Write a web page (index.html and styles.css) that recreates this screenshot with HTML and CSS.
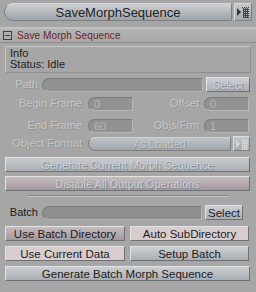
FILE: index.html
```html
<!DOCTYPE html>
<html>
<head>
<meta charset="utf-8">
<link rel="stylesheet" href="styles.css">
</head>
<body>
<div class="app">
  <div class="top">
    <div class="bigbtn">SaveMorphSequence</div>
    <div class="iconbtn"><svg width="14" height="14" viewBox="0 0 14 14"><path d="M1 3 L5 7 L1 11 Z" fill="#333"/><g fill="#444"><rect x="6" y="2" width="1" height="1"/><rect x="8" y="2" width="1" height="1"/><rect x="10" y="2" width="1" height="1"/><rect x="12" y="2" width="1" height="1"/><rect x="7" y="4" width="6" height="1"/><rect x="7" y="6" width="6" height="1"/><rect x="7" y="8" width="6" height="1"/><rect x="7" y="10" width="6" height="1"/><rect x="7" y="12" width="6" height="1"/><rect x="7" y="3" width="1" height="10"/><rect x="9" y="3" width="1" height="10"/><rect x="11" y="3" width="1" height="10"/></g></svg></div>
  </div>
  <div class="header">
    <span class="minus"></span>
    <span class="htitle">Save Morph Sequence</span>
  </div>
  <div class="panel">
    <div class="info">
      <div>Info</div>
      <div>Status: Idle</div>
    </div>
    <div class="row r-path">
      <span class="lbl lbl-path dis">Path</span>
      <div class="field wide dis-field"></div>
      <div class="btn dis sel">Select</div>
    </div>
    <div class="row r-begin">
      <span class="lbl lbl-a dis">Begin Frame</span>
      <div class="field num dis-field"><span>0</span></div>
      <span class="lbl lbl-b dis">Offset</span>
      <div class="field num dis-field"><span>0</span></div>
    </div>
    <div class="row r-end">
      <span class="lbl lbl-a dis">End Frame</span>
      <div class="field num dis-field"><span>60</span></div>
      <span class="lbl lbl-b dis">Objs/Frm</span>
      <div class="field num dis-field"><span>1</span></div>
    </div>
    <div class="row r-obj">
      <span class="lbl lbl-a dis">Object Format</span>
      <div class="drop dis">As Loaded</div>
      <div class="iconbtn small"><svg width="14" height="14" viewBox="0 0 14 14"><path d="M1 3 L5 7 L1 11 Z" fill="#d2d4d6"/><g fill="#d2d4d6"><rect x="6" y="2" width="1" height="1"/><rect x="8" y="2" width="1" height="1"/><rect x="10" y="2" width="1" height="1"/><rect x="12" y="2" width="1" height="1"/><rect x="7" y="4" width="6" height="1"/><rect x="7" y="6" width="6" height="1"/><rect x="7" y="8" width="6" height="1"/><rect x="7" y="10" width="6" height="1"/><rect x="7" y="12" width="6" height="1"/><rect x="7" y="3" width="1" height="10"/><rect x="9" y="3" width="1" height="10"/><rect x="11" y="3" width="1" height="10"/></g></svg></div>
    </div>
    <div class="btn full dis blue r-gen">Generate Current Morph Sequence</div>
    <div class="btn full dis rose r-disable">Disable All Output Operations</div>
    <div class="sep"></div>
    <div class="row r-batch">
      <span class="lbl lbl-path">Batch</span>
      <div class="field wide"></div>
      <div class="btn sel en">Select</div>
    </div>
    <div class="grid2">
      <div class="btn en rosebtn">Use Batch Directory</div>
      <div class="btn en pink">Auto SubDirectory</div>
      <div class="btn en pink">Use Current Data</div>
      <div class="btn en">Setup Batch</div>
    </div>
    <div class="btn full en r-genbatch">Generate Batch Morph Sequence</div>
  </div>
</div>
</body>
</html>
```

FILE: styles.css
```css
html, body { margin: 0; padding: 0; }
body {
  width: 256px; height: 292px; overflow: hidden;
  background: #a6a6a6;
  font-family: "Liberation Sans", Arial, sans-serif;
  font-size: 11px;
  color: #1a1a1a;
}
.app { display: flex; flex-direction: column; height: 292px; }
.top {
  display: flex; gap: 2px; padding: 3px 4px 0 4px; height: 19px;
}
.bigbtn {
  flex: 1; height: 18px; box-sizing: border-box;
  border-radius: 9px 2px 2px 9px;
  background: linear-gradient(#cdd0d3, #b6babe 50%, #9ea3a9);
  border: 1px solid #7d7f82;
  border-top-color: #d8d8d8;
  display: flex; align-items: center; justify-content: center;
  font-family: "Liberation Sans Narrow", "Liberation Sans", Arial, sans-serif;
  font-size: 13px; color: #222;
}
.iconbtn {
  width: 18px; height: 18px; box-sizing: border-box;
  border: 1px solid #7d7f82; border-top-color: #dcdcdc; border-left-color: #dcdcdc;
  background: linear-gradient(#c4c7ca, #a5a8ac);
  display: flex; align-items: center; justify-content: center;
}
.header {
  margin-top: 5px;
  height: 13px;
  border-top: 2px solid #c2c2c2;
  border-bottom: 1px solid #8c8c8c;
  background: linear-gradient(#b4b4b4, #a9a9a9);
  display: flex; align-items: center; gap: 5px; padding-left: 3px;
}
.minus {
  width: 7px; height: 7px; border: 1px solid #6d2a2a; position: relative;
}
.minus::after {
  content: ""; position: absolute; left: 1px; right: 1px; top: 3px; height: 1px; background: #6d2a2a;
}
.htitle {
  font-size: 10px; color: #6d2424; letter-spacing: 0.1px;
}
.panel {
  flex: 1; margin: 1px 5px 4px 4px;
  display: flex; flex-direction: column;
  padding: 0 0 0 1px;
}
.info {
  margin-top: 2px; height: 27px; box-sizing: border-box;
  border: 1px solid #c6c6c6; border-right-color: #8e8e8e; border-bottom-color: #8e8e8e;
  padding: 1px 0 0 4px; line-height: 11px; font-size: 11px; color: #222;
}
.row { display: flex; align-items: flex-start; height: 15px; }
.r-path { margin-top: 4px; }
.r-begin { margin-top: 4px; }
.r-end { margin-top: 7px; }
.r-obj { margin-top: 3px; }
.r-gen { margin-top: 6px; }
.r-disable { margin-top: 4px; }
.r-batch { margin-top: 8px; }
.grid2 { margin-top: 6px; }
.r-genbatch { margin-top: 5px; }
.lbl { text-align: right; line-height: 15px; white-space: nowrap; }
.dis { color: #c6c6c6; text-shadow: 1px 1px 0 #919191; }
.lbl-path { width: 33px; margin-right: 4px; }
.lbl-a { width: 77px; margin-right: 6px; }
.lbl-b { width: 66px; margin-right: 5px; }
.field {
  margin-top: 1px;
  height: 14px; box-sizing: border-box; background: #8e8e8e;
  border-radius: 7px 0 0 7px;
  border: 1px solid #7a7a7a; border-bottom-color: #b6b6b6; border-right-color: #b6b6b6;
  display: flex; align-items: center; padding-left: 5px;
}
.field span { color: #b4b4b4; }
.wide { flex: 1; margin-right: 3px; }
.num { width: 45px; }
.btn {
  height: 15px; box-sizing: border-box;
  display: flex; align-items: center; justify-content: center;
  border: 1px solid #6e7074; border-top-color: #e2e2e2; border-left-color: #e2e2e2;
  background: linear-gradient(#ccd0d4, #a9aeb4);
  white-space: nowrap;
}
.sel { width: 44px; margin-right: 1px; }
.r-batch .sel { width: 38px; margin-right: 8px; }
.btn.dis { color: #cdd0d3; text-shadow: 1px 1px 0 #868a8e; }
.dis-field { background: #929292; }
.drop {
  margin-top: 1px;
  flex: 1; height: 14px; box-sizing: border-box; border-radius: 7px 2px 2px 7px;
  border: 1px solid #7d7f82; border-top-color: #d0d0d0;
  background: linear-gradient(#bfc3c7, #a2a7ac);
  display: flex; align-items: center; justify-content: center; margin-right: 2px;
}
.iconbtn.small { width: 17px; height: 15px; margin-right: 1px; }
.blue { background: linear-gradient(#c9cdd1, #a9adb2); }
.btn.rose { background: linear-gradient(#c6bcc0, #a4999e); }
.btn.full { margin-right: 1px; }
.sep {
  height: 0; border-top: 1px solid #8a8a8a; border-bottom: 1px solid #c4c4c4;
  margin: 4px 23px 0 23px;
}
.en { color: #1c1c1c; font-size: 11.5px; }
.grid2 { display: grid; grid-template-columns: 120px 119px; gap: 5px 5px; }
.rosebtn { background: linear-gradient(#c6bcc0, #a4999e); }
.pink { background: #d9cccf; }
```
